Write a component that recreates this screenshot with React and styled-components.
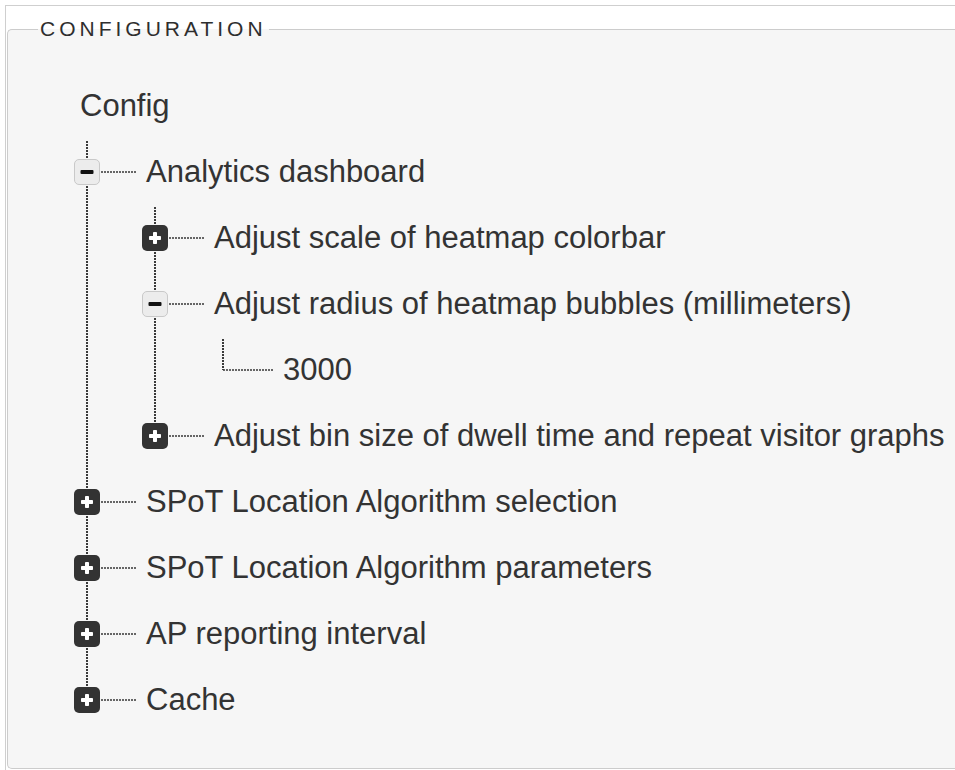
import React from "react";
import styled, { createGlobalStyle } from "styled-components";

const GlobalStyle = createGlobalStyle`
  html, body {
    margin: 0;
    padding: 0;
    overflow: hidden;
    background: #fff;
    font-family: "Liberation Sans", Arial, Helvetica, sans-serif;
  }
`;

const Frame = styled.div`
  margin: 5px 0 0 5px;
  border-top: 1px solid #cfcfcf;
  border-left: 1px solid #cfcfcf;
  height: 765px;
  padding-left: 1px;
  box-sizing: border-box;
`;

const Panel = styled.fieldset`
  margin: 12px 0 0 0;
  padding: 0 0 35px 0;
  width: 100%;
  min-width: 0;
  border: 1px solid #cccccc;
  border-right: none;
  border-radius: 5px 0 0 5px;
  background: #f6f6f6;
  box-sizing: border-box;
`;

const Legend = styled.legend`
  margin-left: 30px;
  padding: 0 2px;
  font-size: 21px;
  line-height: 22px;
  letter-spacing: 4px;
  color: #2e2e2e;
  text-transform: uppercase;
`;

const Tree = styled.div`
  padding: 33px 0 0 66px;
`;

const Row = styled.div`
  display: flex;
  align-items: center;
  height: 66px;
  white-space: nowrap;
`;

const Toggle = styled.span`
  position: relative;
  z-index: 1;
  flex: 0 0 auto;
  display: flex;
  align-items: center;
  justify-content: center;
  width: ${(p) => (p.open ? "24px" : "26px")};
  height: ${(p) => (p.open ? "24px" : "26px")};
  border-radius: 5px;
  background: ${(p) => (p.open ? "#ececec" : "#333333")};
  border: ${(p) => (p.open ? "1px solid #c9c9c9" : "none")};
`;

const Connector = styled.span`
  flex: 0 0 auto;
  width: ${(p) => p.width}px;
  height: 2px;
  margin-left: ${(p) => p.offset || 1}px;
  background: repeating-linear-gradient(
    to right,
    #666 0 2px,
    transparent 2px 3px
  );
`;

const Label = styled.span`
  margin-left: ${(p) => p.gap || 10}px;
  font-size: 31px;
  color: #333;
`;

const ChildList = styled.div`
  position: relative;
  margin-left: ${(p) => p.indent}px;

  &::before {
    content: "";
    position: absolute;
    left: 12px;
    top: 2px;
    bottom: 33px;
    width: 2px;
    background: repeating-linear-gradient(
      to bottom,
      #3a3a3a 0 2px,
      transparent 2px 3px
    );
  }
`;

const ToggleIcon = ({ open }) => (
  <Toggle open={open}>
    <svg width="14" height="14" viewBox="0 0 14 14">
      {open ? (
        <rect x="0.5" y="5" width="13" height="4" rx="1" fill="#111" />
      ) : (
        <>
          <rect x="1" y="5" width="12" height="4" rx="0.8" fill="#fff" />
          <rect x="5" y="1" width="4" height="12" rx="0.8" fill="#fff" />
        </>
      )}
    </svg>
  </Toggle>
);

const config = {
  label: "Config",
  children: [
    {
      label: "Analytics dashboard",
      open: true,
      children: [
        { label: "Adjust scale of heatmap colorbar" },
        {
          label: "Adjust radius of heatmap bubbles (millimeters)",
          open: true,
          children: [{ label: "3000", leaf: true }],
        },
        { label: "Adjust bin size of dwell time and repeat visitor graphs" },
      ],
    },
    { label: "SPoT Location Algorithm selection" },
    { label: "SPoT Location Algorithm parameters" },
    { label: "AP reporting interval" },
    { label: "Cache" },
  ],
};

const Node = ({ node }) => (
  <>
    <Row>
      {node.leaf ? (
        <Connector offset={13} width={50} />
      ) : (
        <>
          <ToggleIcon open={node.open} />
          <Connector width={35} />
        </>
      )}
      <Label>{node.label}</Label>
    </Row>
    {node.open && node.children && (
      <ChildList indent={68}>
        {node.children.map((child) => (
          <Node key={child.label} node={child} />
        ))}
      </ChildList>
    )}
  </>
);

export default function App() {
  return (
    <>
      <GlobalStyle />
      <Frame>
        <Panel>
          <Legend>Configuration</Legend>
          <Tree>
            <Row>
              <Label gap={6}>{config.label}</Label>
            </Row>
            <ChildList indent={0}>
              {config.children.map((child) => (
                <Node key={child.label} node={child} />
              ))}
            </ChildList>
          </Tree>
        </Panel>
      </Frame>
    </>
  );
}
